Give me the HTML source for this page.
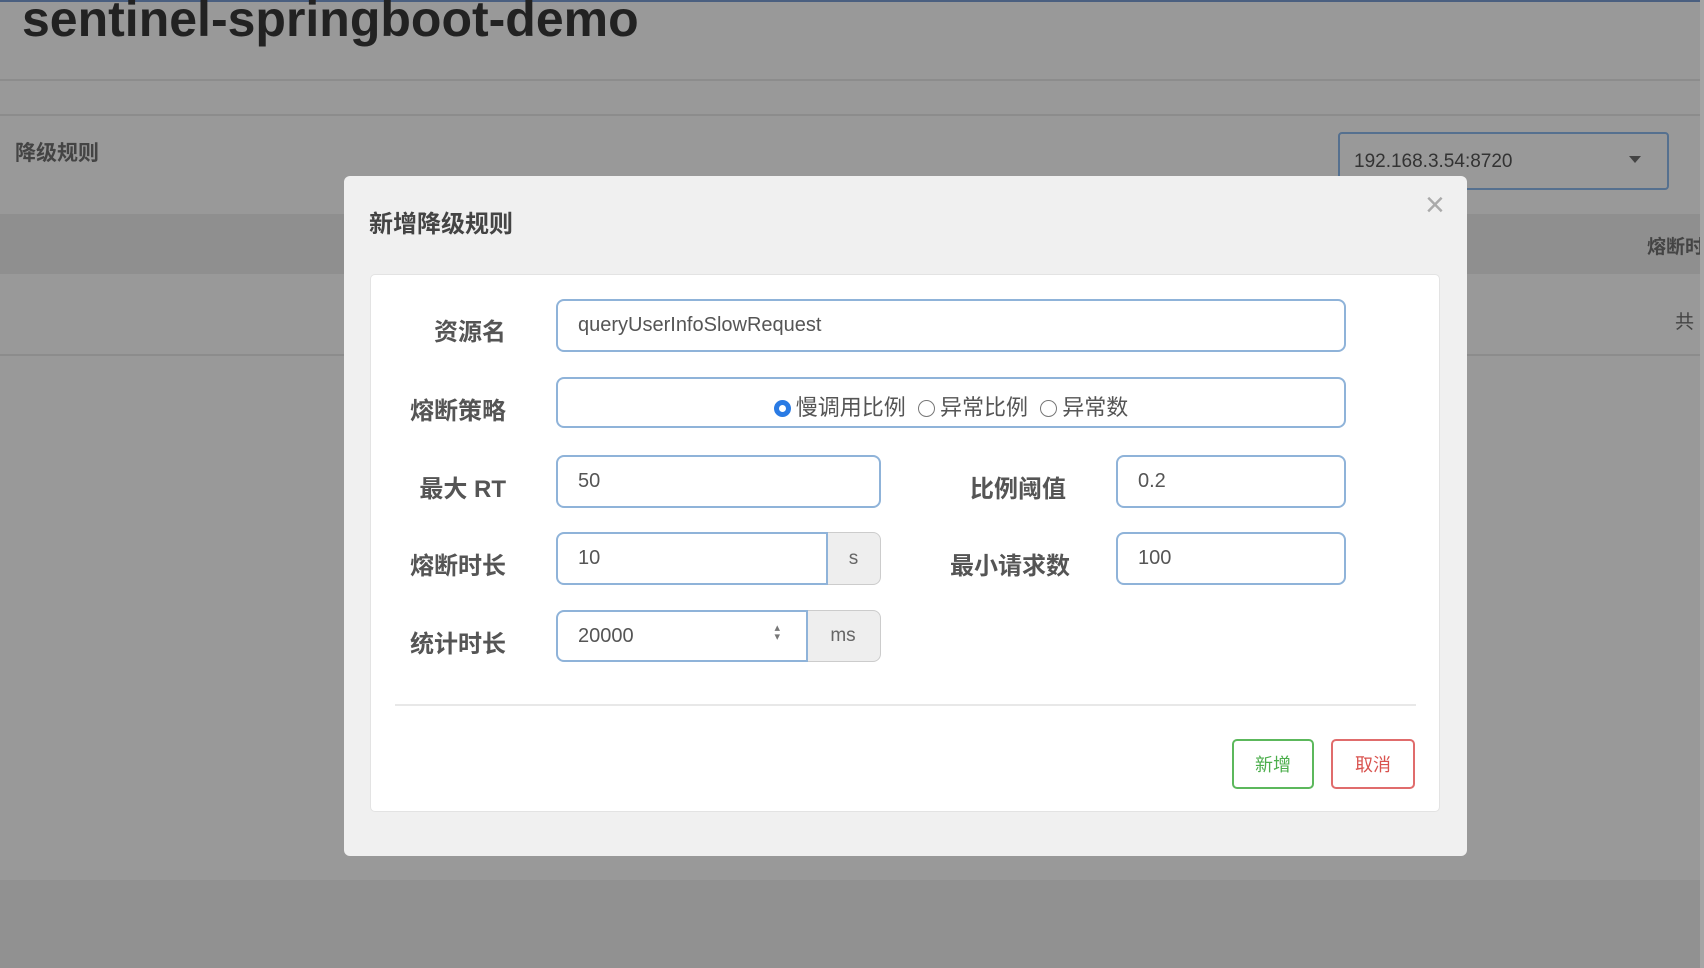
<!DOCTYPE html>
<html><head><meta charset="utf-8"><style>
*{box-sizing:border-box;margin:0;padding:0}
body{width:1704px;height:968px;overflow:hidden;background:#999;font-family:"Liberation Sans","Noto Sans CJK SC",sans-serif;position:relative;color:#333}
.a{position:absolute}
.lbl{position:absolute;font-size:24px;font-weight:bold;color:#555;text-align:right}
.inp{position:absolute;background:#fff;border:2px solid #8fb3d9;border-radius:8px;font-size:20px;color:#555;padding-left:20px;display:flex;align-items:center}
.add{position:absolute;background:#eee;border:1px solid #ccc;border-radius:0 8px 8px 0;color:#666;font-size:19px;display:flex;align-items:center;justify-content:center}
.rad{display:inline-block;width:17px;height:17px;border:1px solid #777;border-radius:50%;vertical-align:-2px;margin-right:5px}
</style></head><body>
<div class="a" style="left:0;top:0;width:1704px;height:2px;background:#4a5f80"></div>
<div class="a" style="left:22px;top:-10px;font-size:50px;font-weight:bold;color:#222">sentinel-springboot-demo</div>
<div class="a" style="left:0;top:79px;width:1704px;height:2px;background:#8c8c8c"></div>
<div class="a" style="left:0;top:114px;width:1704px;height:2px;background:#8c8c8c"></div>
<div class="a" style="left:15px;top:137px;font-size:21px;font-weight:bold;color:#444">降级规则</div>
<div class="a" style="left:1338px;top:132px;width:331px;height:58px;border:2px solid #55708f;border-radius:4px;font-size:19px;color:#333;padding:17px 14px">192.168.3.54:8720<span style="position:absolute;right:26px;top:22px;border-left:6px solid transparent;border-right:6px solid transparent;border-top:7px solid #444"></span></div>
<div class="a" style="left:0;top:214px;width:1704px;height:60px;background:#8f8f8f"></div>
<div class="a" style="left:1647px;top:232px;font-size:19px;font-weight:bold;color:#444">熔断时</div>
<div class="a" style="left:1675px;top:307px;font-size:19px;color:#444">共</div>
<div class="a" style="left:0;top:354px;width:1704px;height:2px;background:#8c8c8c"></div>
<div class="a" style="left:0;top:880px;width:1704px;height:88px;background:#919191"></div>
<div class="a" style="left:1700px;top:0;width:4px;height:968px;background:#a5a5a5"></div>

<div class="a" style="left:344px;top:176px;width:1123px;height:680px;background:#f0f0f0;border-radius:6px"></div>
<div class="a" style="left:369px;top:204px;font-size:24px;font-weight:bold;color:#444">新增降级规则</div>
<div class="a" style="left:1425px;top:186px;font-size:34px;color:#aaa;font-weight:300">×</div>
<div class="a" style="left:370px;top:274px;width:1070px;height:538px;background:#fff;border:1px solid #e3e3e3;border-radius:5px"></div>

<div class="lbl" style="left:380px;top:312px;width:126px">资源名</div>
<div class="inp" style="left:556px;top:299px;width:790px;height:53px">queryUserInfoSlowRequest</div>

<div class="lbl" style="left:380px;top:391px;width:126px">熔断策略</div>
<div class="inp" style="left:556px;top:377px;width:790px;height:51px;justify-content:center;padding:6px 0 0 0;font-size:22px">
<span><span class="rad" style="border:5px solid #2a7be4"></span>慢调用比例 &nbsp;<span class="rad"></span>异常比例 &nbsp;<span class="rad"></span>异常数</span></div>

<div class="lbl" style="left:380px;top:469px;width:126px">最大 RT</div>
<div class="inp" style="left:556px;top:455px;width:325px;height:53px">50</div>
<div class="lbl" style="left:900px;top:469px;width:166px">比例阈值</div>
<div class="inp" style="left:1116px;top:455px;width:230px;height:53px">0.2</div>

<div class="lbl" style="left:380px;top:546px;width:126px">熔断时长</div>
<div class="add" style="left:826px;top:532px;width:55px;height:53px">s</div>
<div class="inp" style="left:556px;top:532px;width:272px;height:53px;border-radius:8px 0 0 8px">10</div>
<div class="lbl" style="left:900px;top:546px;width:170px">最小请求数</div>
<div class="inp" style="left:1116px;top:532px;width:230px;height:53px">100</div>

<div class="lbl" style="left:380px;top:624px;width:126px">统计时长</div>
<div class="add" style="left:805px;top:610px;width:76px;height:52px">ms</div>
<div class="inp" style="left:556px;top:610px;width:252px;height:52px;border-radius:8px 0 0 8px">20000<span style="position:absolute;right:26px;top:12px;font-size:11px;color:#777;line-height:9px">▴<br>▾</span></div>

<div class="a" style="left:395px;top:704px;width:1021px;height:2px;background:#e8e8e8"></div>
<div class="a" style="left:1232px;top:739px;width:82px;height:50px;border:2px solid #5cb85c;border-radius:5px;color:#4cae4c;font-size:18px;display:flex;align-items:center;justify-content:center">新增</div>
<div class="a" style="left:1331px;top:739px;width:84px;height:50px;border:2px solid #e06c6c;border-radius:5px;color:#d9534f;font-size:18px;display:flex;align-items:center;justify-content:center">取消</div>
</body></html>
